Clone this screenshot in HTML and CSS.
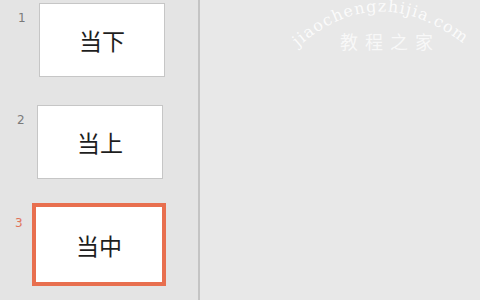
FILE: index.html
```html
<!DOCTYPE html>
<html lang="zh">
<head>
<meta charset="utf-8">
<link rel="stylesheet" href="styles.css">
</head>
<body>
<div class="app">
  <div class="sidebar">
    <div class="row row-1">
      <span class="num">1</span>
      <div class="slide"><span class="title">当下</span></div>
    </div>
    <div class="row row-2">
      <span class="num">2</span>
      <div class="slide"><span class="title">当上</span></div>
    </div>
    <div class="row row-3 active">
      <span class="num">3</span>
      <div class="slide"><span class="title">当中</span></div>
    </div>
  </div>
  <div class="main">
    <svg class="watermark" width="200" height="64" viewBox="0 0 200 64">
      <defs>
        <path id="arc" d="M 18 47 Q 100 -25 190 49"/>
      </defs>
      <text class="wm-latin"><textPath href="#arc" textLength="182">jiaochengzhijia.com</textPath></text>
      <text class="wm-cjk" x="60" y="49">教程之家</text>
    </svg>
  </div>
</div>
</body>
</html>
```
FILE: styles.css
```css
html, body {
  margin: 0;
  padding: 0;
  width: 480px;
  height: 300px;
  overflow: hidden;
  background: #e6e6e6;
}
.app {
  display: flex;
  width: 480px;
  height: 300px;
}
.sidebar {
  width: 198px;
  border-right: 2px solid #c4c4c4;
  background: #e4e4e4;
  display: flex;
  flex-direction: column;
  padding-top: 3px;
  box-sizing: content-box;
}
.row {
  display: flex;
  align-items: flex-start;
  padding-left: 18px;
}
.row-2 { margin-top: 28px; padding-left: 17px; }
.row-3 { margin-top: 24px; padding-left: 15px; }
.num {
  width: 20px;
  font-family: "DejaVu Sans", "Liberation Sans", sans-serif;
  font-size: 12px;
  color: #7a7a7a;
  margin-top: 8px;
}
.slide {
  width: 124px;
  height: 72px;
  background: #ffffff;
  border: 1px solid #c6c6c6;
  display: flex;
  align-items: center;
  justify-content: center;
}
.row-1 .slide { margin-left: 1px; }
.title {
  font-family: "Noto Sans CJK SC", "Noto Sans", sans-serif;
  font-size: 23px;
  color: #1e1e1e;
}
.active .num {
  color: #e0735a;
  margin-top: 13px;
  width: 17px;
}
.active .slide {
  width: 126px;
  height: 75px;
  border: 4px solid #e86f4f;
}
.main {
  flex: 1;
  position: relative;
  background: #e8e8e8;
}
.watermark {
  position: absolute;
  left: 80px;
  top: 0;
}
.wm-latin {
  font-family: "DejaVu Serif", "Liberation Serif", serif;
  font-size: 16px;
  fill: #ffffff;
  opacity: 0.85;
}
.wm-cjk {
  font-family: "Noto Sans CJK SC", serif;
  font-size: 18px;
  letter-spacing: 7px;
  fill: #ffffff;
  opacity: 0.7;
}
```
